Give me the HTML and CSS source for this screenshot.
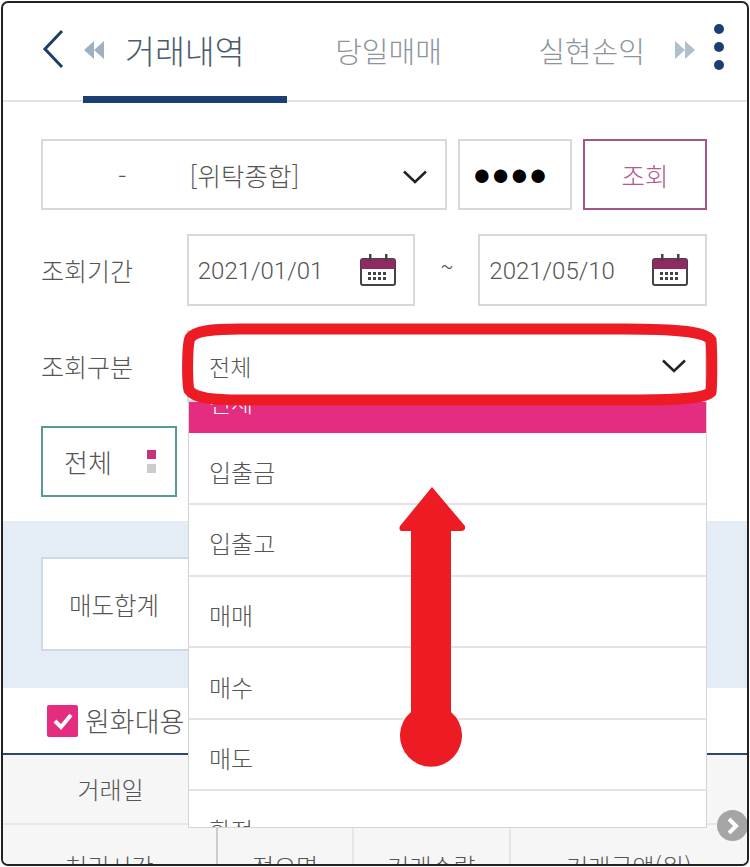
FILE: index.html
```html
<!DOCTYPE html>
<html lang="ko">
<head>
<meta charset="utf-8">
<title>거래내역</title>
<link rel="stylesheet" href="styles.css">
</head>
<body>
<div class="frame">
  <header class="header">
    <div class="back">
      <svg width="22" height="40" viewBox="0 0 22 40"><path d="M20 2 L3 20 L20 38" fill="none" stroke="#1c3f66" stroke-width="3"/></svg>
    </div>
    <div class="tab active">
      <svg class="dbl" width="20" height="18" viewBox="0 0 20 18"><path d="M10 0 V18 L0 9Z M20 0 V18 L10 9Z" fill="#9fb0c0"/></svg>
      <span>거래내역</span>
    </div>
    <div class="tab">당일매매</div>
    <div class="tab">실현손익</div>
    <svg class="dbl next" width="20" height="18" viewBox="0 0 20 18"><path d="M0 0 V18 L10 9Z M10 0 V18 L20 9Z" fill="#aebfd0"/></svg>
    <div class="more"><i></i><i></i><i></i></div>
  </header>

  <section class="form">
    <div class="row">
      <div class="box account">
        <span class="acc-no">-</span>
        <span class="acc-name">[위탁종합]</span>
        <svg class="chev" width="26" height="14" viewBox="0 0 26 14"><path d="M2 1.500 L13 12 L24 1.500" fill="none" stroke="#222" stroke-width="2.500"/></svg>
      </div>
      <div class="box pw">●●●●</div>
      <div class="box search">조회</div>
    </div>
    <div class="row">
      <div class="label">조회기간</div>
      <div class="box date">
        <span>2021/01/01</span>
        <svg class="cal" width="36" height="32" viewBox="0 0 36 32"><use href="#cal"/></svg>
      </div>
      <div class="tilde">~</div>
      <div class="box date">
        <span>2021/05/10</span>
        <svg class="cal" width="36" height="32" viewBox="0 0 36 32"><use href="#cal"/></svg>
      </div>
    </div>
    <div class="row">
      <div class="label">조회구분</div>
      <div class="box kind">
        <span>전체</span>
        <svg class="chev" width="26" height="14" viewBox="0 0 26 14"><path d="M2 1.500 L13 12 L24 1.500" fill="none" stroke="#222" stroke-width="2.500"/></svg>
        <ul class="dropdown">
          <li class="selected">전체</li>
          <li>입출금</li>
          <li>입출고</li>
          <li>매매</li>
          <li>매수</li>
          <li>매도</li>
          <li>환전</li>
        </ul>
      </div>
    </div>
    <div class="row">
      <div class="box filter">
        <span>전체</span>
        <div class="pager"><i class="on"></i><i></i></div>
      </div>
    </div>
  </section>

  <section class="band">
    <div class="sum"><span>매도합계</span></div>
  </section>

  <div class="check-row">
    <span class="check">
      <svg width="22" height="18" viewBox="0 0 22 18"><path d="M3 9 L9 15 L19 3" fill="none" stroke="#fff" stroke-width="4"/></svg>
    </span>
    <span class="check-label">원화대용</span>
  </div>

  <div class="table">
    <div class="thead-1">
      <div class="th-date">거래일</div>
    </div>
    <div class="thead-2">
      <div>처리시간</div>
      <div>적요명</div>
      <div>거래수량</div>
      <div>거래금액(원)</div>
    </div>
  </div>

  <div class="scroll-next">
    <svg width="14" height="20" viewBox="0 0 14 20"><path d="M3 3 L10 10 L3 17" fill="none" stroke="#fff" stroke-width="4"/></svg>
  </div>

  <svg class="notes" width="750" height="867" viewBox="0 0 750 867">
    <path d="M240 329 C210 329 195 331 190 338 C187 345 187 382 189 390 C195 399 215 400 240 400 L640 400 C680 400 705 398 711 392 C712 385 712 350 711 340 C705 332 680 329 625 329 Z" fill="none" stroke="#ed1c24" stroke-width="11"/>
    <path d="M432 487 L465 526 Q466 531 461 531 L451 531 L451 712 A31 31 0 1 1 411 712 L411 531 L403 531 Q398 531 400 526 Z" fill="#ed1c24"/>
  </svg>

  <svg class="defs" width="0" height="0">
    <defs>
      <g id="cal">
        <rect x="1" y="5" width="34" height="26" rx="2" fill="#fff" stroke="#444" stroke-width="2"/>
        <rect x="1" y="5" width="34" height="10" fill="#8f2a63"/>
        <rect x="9" y="0" width="2.500" height="7" fill="#444"/>
        <rect x="25" y="0" width="2.500" height="7" fill="#444"/>
        <path d="M8 18h3v3h-3zM13 18h3v3h-3zM18 18h3v3h-3zM23 18h3v3h-3zM8 23h3v3h-3zM13 23h3v3h-3zM18 23h3v3h-3zM23 23h3v3h-3z" fill="#444"/>
      </g>
    </defs>
  </svg>
</div>
</body>
</html>
```

FILE: styles.css
```css
* { box-sizing: border-box; }
html, body { margin: 0; padding: 0; background: #fff; }
body {
  padding: 1px 0 0 1px;
  font-family: "Noto Sans CJK KR", "Noto Sans", sans-serif;
  font-weight: 300;
  color: #555;
}
.frame {
  position: relative;
  width: 748px;
  height: 865px;
  border: 2px solid #222;
  border-radius: 7px;
  overflow: hidden;
  background: #fff;
}
.header {
  position: relative;
  display: flex;
  align-items: center;
  height: 99px;
  border-bottom: 2px solid #e4e4e4;
}
.back { width: 80px; padding: 0 0 6px 39px; display: flex; }
.tab {
  position: relative;
  width: 203px;
  height: 100%;
  display: flex;
  align-items: center;
  justify-content: center;
  font-size: 29px;
  color: #8d949b;
  padding-bottom: 4px;
}
.tab.active {
  width: 204px;
  font-size: 32.500px;
  color: #4a5b6c;
  justify-content: flex-start;
  padding-left: 42px;
}
.tab.active::after {
  content: "";
  position: absolute;
  left: 0;
  right: 0;
  bottom: -3px;
  height: 7px;
  background: #1c3f73;
}
.tab.active .dbl { position: absolute; left: 1px; top: 38px; }
.dbl.next { position: absolute; left: 672px; top: 38px; }
.more {
  position: absolute;
  left: 711px;
  top: 21px;
  display: flex;
  flex-direction: column;
  gap: 8px;
}
.more i { width: 10px; height: 10px; border-radius: 50%; background: #1c3f73; display: block; }

.form {
  padding: 37px 40px 24px 38px;
  display: flex;
  flex-direction: column;
  gap: 24px;
}
.row { display: flex; align-items: stretch; height: 71.500px; }
.row:first-child { height: 71px; }
.row:nth-child(3) { height: 72px; }
.box {
  border: 2px solid #d8d8d8;
  display: flex;
  align-items: center;
  font-size: 23px;
  color: #555;
  background: #fff;
}
.account { width: 406px; padding-left: 75px; position: relative; font-size: 25.500px; }
.acc-name { margin-left: 63px; }
.account .chev { position: absolute; left: 359px; top: 29px; }
.pw {
  width: 114px;
  margin-left: 11px;
  padding-right: 10px;
  justify-content: center;
  font-family: "DejaVu Sans", sans-serif;
  font-size: 31px;
  color: #000;
}
.search {
  width: 124px;
  margin-left: 11px;
  justify-content: center;
  border-color: #a8548a;
  color: #b4588f;
  font-size: 25.500px;
}
.label {
  width: 146px;
  display: flex;
  align-items: center;
  font-size: 25px;
  color: #555;
}
.date {
  width: 229px;
  justify-content: space-between;
  padding: 0 17px 0 9px;
  font-family: "Roboto", sans-serif;
  font-weight: 300;
  font-size: 24px;
}
.date span { padding-top: 3px; }
.tilde {
  width: 63px;
  display: flex;
  justify-content: center;
  padding-top: 14px;
  font-size: 24px;
}
.cal { flex: none; }
.kind {
  position: relative;
  width: 520px;
  padding-left: 20px;
  justify-content: space-between;
  padding-right: 18px;
}
.dropdown {
  position: absolute;
  left: -1px;
  top: calc(100% + 2px);
  width: 519px;
  height: 426px;
  margin: 0;
  padding: 0;
  list-style: none;
  overflow: hidden;
  background: #fff;
  border: 1px solid #d4d4d4;
  border-top: 0;
  font-size: 24px;
  color: #555;
}
.dropdown li {
  height: 71.600px;
  padding: 6px 0 0 20px;
  display: flex;
  align-items: center;
  border-bottom: 2px solid #e4e4e4;
}
.dropdown li.selected {
  height: 31px;
  margin-bottom: 1px;
  padding: 0 0 21px 20px;
  align-items: flex-end;
  background: #e42d80;
  color: #fff;
  border-bottom: 0;
  line-height: 20px;
}
.filter {
  width: 136px;
  padding: 0 19px 0 21px;
  justify-content: space-between;
  border-color: #5a9a96;
  font-size: 26px;
}
.pager { display: flex; flex-direction: column; gap: 5px; }
.pager i { width: 9px; height: 9px; background: #ccc; display: block; }
.pager i.on { background: #c8327c; }

.band {
  background: #e4ecf6;
  height: 167px;
  padding: 36px 40px 0 38px;
}
.sum {
  height: 94px;
  background: #fff;
  border: 2px solid #ccd9e6;
  display: flex;
  align-items: center;
  padding-left: 26px;
  font-size: 24.500px;
  color: #555;
}
.check-row {
  height: 65px;
  display: flex;
  align-items: center;
  gap: 7px;
  padding: 0 0 0 44px;
}
.check {
  width: 31px;
  height: 32px;
  border-radius: 2px;
  background: #e42d80;
  display: flex;
  align-items: center;
  justify-content: center;
}
.check-label { font-size: 27px; color: #555; }
.table { border-top: 2px solid #2c4a68; background: #f6f6f6; font-size: 24px; color: #555; }
.thead-1 { height: 70px; border-bottom: 2px solid #e6e6e6; display: flex; align-items: center; }
.th-date { width: 215px; text-align: center; padding-bottom: 2px; }
.thead-2 { display: grid; grid-template-columns: 215px 136px 157px 1fr; height: 80px; }
.thead-2 div {
  display: flex;
  align-items: center;
  justify-content: center;
  border-right: 2px solid #e6e6e6;
}
.thead-2 div:first-child { border-right-color: #ccc; }
.thead-2 div:last-child { border-right: 0; }
.scroll-next {
  position: absolute;
  left: 714px;
  top: 807px;
  width: 31px;
  height: 31px;
  border-radius: 50%;
  background: #a5a5a5;
  display: flex;
  align-items: center;
  justify-content: center;
}
.notes { position: absolute; left: -3px; top: -3px; pointer-events: none; }
.defs { position: absolute; }
```
